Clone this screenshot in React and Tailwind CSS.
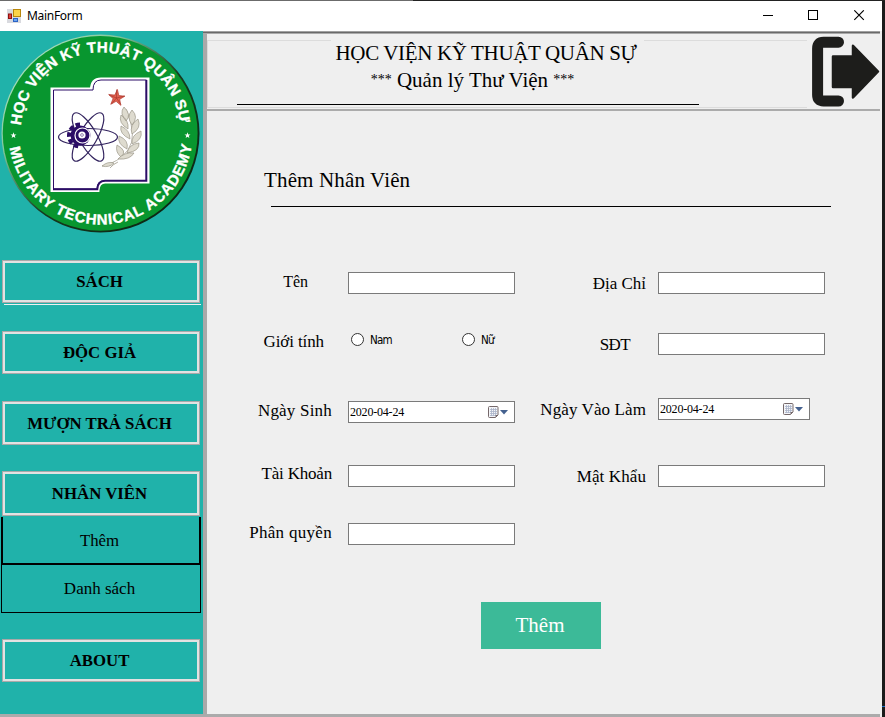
import React from "react";

function AppIcon() {
  return (
    <svg width="14" height="14" viewBox="0 0 14 14" className="shrink-0">
      <rect width="14" height="14" fill="#d9dadf" />
      <rect x="6.5" y=".5" width="7" height="7" fill="#fbd34a" stroke="#b8860b" />
      <rect x="1.5" y="5" width="3" height="4.5" fill="#e04038" stroke="#8e1010" />
      <rect x="6.5" y="9.5" width="4" height="3" fill="#6aa5f2" stroke="#2c63c4" />
    </svg>
  );
}

function TitleBar() {
  return (
    <div className="flex h-[30px] shrink-0 items-center bg-white pl-[7px] text-black">
      <AppIcon />
      <span className="ml-[6px] font-['Noto_Sans','Open_Sans',sans-serif] text-[12px] leading-[30px] tracking-[-0.3px]">
        MainForm
      </span>
      <svg width="102" height="11" viewBox="0 0 102 11" className="-mt-px ml-auto mr-[17px]" fill="none" stroke="#000">
        <path d="M0 5.5H10M45.5 .5h9v9h-9z" shapeRendering="crispEdges" />
        <path d="M91.3 .3l9.5 9.5M100.8 .3l-9.5 9.5" strokeWidth="1.1" />
      </svg>
    </div>
  );
}

const STAR = "M0-4L.95-1.25H3.8L1.55.45 2.35 3.2 0 1.55-2.35 3.2-1.55.45-3.8-1.25H-.95Z";

function Logo() {
  return (
    <svg width="203" height="204" viewBox="0 31 203 204" className="shrink-0">
      <defs>
        <linearGradient id="rim" x1="0" y1="0" x2="1" y2="1">
          <stop offset="0" stopColor="#c5efd5" />
          <stop offset=".3" stopColor="#7fc79a" />
          <stop offset=".55" stopColor="#16391f" />
          <stop offset="1" stopColor="#08200f" />
        </linearGradient>
        <path id="arcTop" d="M20.900 126.500A79.800 79.800 0 0 1 180.100 126.500" />
        <path id="arcBottom" d="M9.600 146.800A92 92 0 0 0 191.400 146.800" />
      </defs>
      <circle cx="100.5" cy="133.5" r="99" fill="url(#rim)" />
      <circle cx="100.2" cy="133.3" r="97.4" fill="#08962f" />
      <g fill="#fff" stroke="#fff" strokeWidth=".35" className="font-['Liberation_Sans',sans-serif] text-[15px] font-bold">
        <text textLength="235">
          <textPath href="#arcTop" startOffset="1" textLength="235">HỌC VIỆN KỸ THUẬT QUÂN SỰ</textPath>
        </text>
        <text textLength="261">
          <textPath href="#arcBottom" startOffset="1" textLength="261">MILITARY TECHNICAL ACADEMY</textPath>
        </text>
      </g>
      <path d={STAR} transform="translate(13.5 135.5) scale(.8)" fill="#fff" />
      <path d={STAR} transform="translate(187.5 135.5) scale(.8)" fill="#fff" />
      <path
        d="M52.5 89.5H92Q92 79.500 101 79.500H147.500V181.500H105Q98 182 97.500 190H52.500Z"
        fill="#fff"
        stroke="#fff"
        strokeWidth="4"
      />
      <path
        d="M53.500 90H93Q93 80 101 80H146.500V180.500H105Q97 181 97 189H53.500Z"
        fill="#fff"
        stroke="#2b0d66"
        strokeWidth="1"
      />
      <path d="M146.300 80V180.700H105Q97.500 181 97.300 189.200H53" fill="none" stroke="#2b0d66" strokeWidth="2" />
      <path d={STAR} transform="translate(116.500 98) rotate(6) scale(2.150)" fill="#e0604f" stroke="#b23a30" strokeWidth=".3" />
      <path d="M116.500 98V89.500M116.500 98l8-2M116.500 98l4.500 6.500M116.500 98l-5 6M116.500 98l-7.500-3" stroke="#a5342a" strokeWidth=".6" />
      <g fill="none" stroke="#33245f" strokeWidth="1.2">
        <ellipse cx="88" cy="137" rx="29.500" ry="8.500" />
        <ellipse cx="88" cy="137" rx="27.500" ry="9" transform="rotate(60 88 137)" />
        <ellipse cx="88" cy="137" rx="27.500" ry="9" transform="rotate(-60 88 137)" />
      </g>
      <path d="M80 124.500A11 11 0 0 0 80 146.500" fill="none" stroke="#2b0d66" strokeWidth="4" strokeDasharray="4.500 2.500" />
      <circle cx="80.500" cy="135.500" r="10" fill="#2b0d66" />
      <circle cx="82.500" cy="135.500" r="7.500" fill="none" stroke="#fff" strokeWidth="1.200" />
      <circle cx="82" cy="135" r="3.600" fill="#fff" />
      <circle cx="82" cy="135" r="1.400" fill="#fff" stroke="#2b0d66" strokeWidth=".5" />
      <g fill="#dedbcf" stroke="#9b9788" strokeWidth=".7">
        <path d="M102 166Q118 163 128 150Q138 136 126 109" fill="none" />
        <path d="M124 107q-5 6 2 14q6-6-2-14zM121 115q-3 8 7 14q1-9-7-14zM121 126q-2 8 9 13q0-9-9-13zM119 136q-2 8 8 13q2-9-8-13zM117 145q-2 7 4 12q7-6-4-12z" />
        <path d="M132 110q7 7 0 15q-6-8 0-15zM138 119q4 9-6 15q-3-9 6-15zM141 131q2 9-9 13q-1-9 9-13zM139 143q1 8-12 10q2-9 12-10zM134 153q-4 7-16 6q6-7 16-6z" />
        <path d="M102 166q6-5 12-3q-5 5-12 3zM110 168q3-4 8-6" />
      </g>
    </svg>
  );
}

function MenuButton({ className, children }) {
  return (
    <button
      className={
        "ml-[2px] flex w-[198px] shrink-0 items-center justify-center border border-[#a9a9a9] text-[16.8px] font-bold leading-5 text-black shadow-[inset_0_0_0_2px_#e2e2e2] " +
        className
      }
    >
      <span className="-ml-[3px]">{children}</span>
    </button>
  );
}

function Sidebar() {
  return (
    <nav className="flex w-[203px] shrink-0 flex-col bg-[#20b2aa]">
      <Logo />
      <MenuButton className="mt-[25px] h-[43px]">SÁCH</MenuButton>
      <div className="ml-1 mt-px h-px w-[197px] shrink-0 bg-[#f0f0f0]" />
      <MenuButton className="mt-[26px] h-[43px]">ĐỘC GIẢ</MenuButton>
      <MenuButton className="mt-[27px] h-[44px] pt-px">MƯỢN TRẢ SÁCH</MenuButton>
      <MenuButton className="mt-[26px] h-[45px]">NHÂN VIÊN</MenuButton>
      <button className="ml-px mt-px h-[48px] w-[200px] shrink-0 border-x-2 border-b-2 border-black pr-[3px] pt-px text-[16.8px] leading-[46px]">
        Thêm
      </button>
      <button className="ml-px h-[48px] w-[200px] shrink-0 border border-t-0 border-black pr-[3px] text-[17px] leading-[47px]">
        Danh sách
      </button>
      <MenuButton className="mt-[26px] h-[43px]">ABOUT</MenuButton>
    </nav>
  );
}

function ExitIcon() {
  return (
    <svg width="68" height="72" viewBox="0 0 68 72" className="shrink-0">
      <path d="M26.500 6.200H11.500Q5.600 6.200 5.600 12.500V59Q5.600 65 11.500 65H26.500" fill="none" stroke="#1d1d1b" strokeWidth="11" strokeLinecap="round" />
      <path d="M21 20.500H41V9.800L66 35.500 41 61.500V51H21Z" fill="#1d1d1b" stroke="#1d1d1b" strokeWidth="2.500" strokeLinejoin="round" />
    </svg>
  );
}

function Asterisks() {
  return <span className="align-[3px] text-[14px] leading-none">***</span>;
}

function Header() {
  return (
    <header className="flex h-[77px] shrink-0 border-b-2 border-[#ababab]">
      <div className="flex h-full w-[600px] flex-col">
        <div className="mt-[6px] flex h-[68px] shrink-0 border-b border-l border-[#dcdcdc]">
          <div className="h-px w-[123px] bg-[#dcdcdc]" />
          <div className="flex w-[313px] flex-col items-center whitespace-nowrap text-[21px]">
            <div className="-ml-[3px] h-[27px] leading-[27px] tracking-[-0.35px]">HỌC VIỆN KỸ THUẬT QUÂN SỰ</div>
            <div className="-ml-[30px] h-[26px] leading-[26px]">
              <Asterisks /> Quản lý Thư Viện <Asterisks />
            </div>
            <div className="-ml-[40px] mt-[11px] h-px w-[462px] shrink-0 bg-black" />
          </div>
          <div className="h-px w-[163px] bg-[#dcdcdc]" />
        </div>
      </div>
      <div className="ml-[5px] mt-[2px]">
        <ExitIcon />
      </div>
    </header>
  );
}

function DateBox({ className }) {
  return (
    <div className={"flex h-[22px] items-center border border-[#7a7a7a] bg-white pl-px " + className}>
      <span className="text-[12px] leading-5 tracking-[-0.2px]">2020-04-24</span>
      <svg width="21" height="13" viewBox="0 0 21 13" className="ml-auto">
        <path d="M1.500 1.500q0-1 1-1h7.500q1 0 1 1v7.500l-2.500 2.500h-6q-1 0-1-1z" fill="#f4f5f8" stroke="#75686a" />
        <path d="M3 3.500h7M3 5.500h7M3 7.500h7M3 9.500h5M4.500 2v8M6.500 2v8M8.500 2v8" stroke="#a9b4c9" strokeWidth=".8" />
        <path d="M8.500 11.500v-2.500h2.500z" fill="#75686a" />
        <path d="M13 4h8l-4 4.500z" fill="#44618f" />
      </svg>
    </div>
  );
}

function TextBox() {
  return <input className="h-[22px] w-[167px] shrink-0 border border-[#7a7a7a] bg-white outline-none" />;
}

function Field({ label, rowClass, labelClass, children }) {
  return (
    <div className={"flex h-[22px] items-start " + rowClass}>
      <label className={"shrink-0 whitespace-nowrap text-right leading-5 " + labelClass}>{label}</label>
      {children}
    </div>
  );
}

function Radio({ label, className }) {
  return (
    <div className={"flex h-[13px] items-center " + className}>
      <span className="h-[13px] w-[13px] shrink-0 rounded-full border border-[#333] bg-white" />
      <span className="ml-[6px] pt-px font-['DejaVu_Sans_Condensed','DejaVu_Sans',sans-serif] text-[11.5px] leading-[13px] tracking-[-0.8px]">
        {label}
      </span>
    </div>
  );
}

function EmployeeForm() {
  return (
    <main className="flex flex-1 flex-col">
      <h1 className="ml-[57px] mt-[57px] text-[21px] leading-6 tracking-[0.15px]">Thêm Nhân Viên</h1>
      <div className="ml-[64px] mt-[14px] h-px w-[560px] shrink-0 bg-black" />
      <div className="mt-[65px] flex text-[17px]">
        <div className="ml-[33px] w-[275px]">
          <Field label="Tên" labelClass="w-[108px] pr-[40px] text-[16px]">
            <TextBox />
          </Field>
          <Field label="Giới tính" rowClass="mt-[39px]" labelClass="-mt-px w-[108px] pr-[24px] tracking-[-0.1px]">
            <Radio label="Nam" className="ml-[3px] w-[40px]" />
            <Radio label="Nữ" className="ml-[71px]" />
          </Field>
          <Field label="Ngày Sinh" rowClass="mt-[46px]" labelClass="w-[108px] pr-[16px] tracking-[0.2px]">
            <DateBox className="w-[167px] pr-[6px]" />
          </Field>
          <Field label="Tài Khoản" rowClass="mt-[42px]" labelClass="-mt-px w-[108px] pr-[16px] tracking-[-0.2px]">
            <TextBox />
          </Field>
          <Field label="Phân quyền" rowClass="mt-[36px]" labelClass="w-[108px] pr-[16px] tracking-[0.3px]">
            <TextBox />
          </Field>
        </div>
        <div className="ml-[15px] w-[295px]">
          <Field label="Địa Chỉ" labelClass="mt-[2px] w-[128px] pr-[12px]">
            <TextBox />
          </Field>
          <Field label="SĐT" rowClass="mt-[39px]" labelClass="mt-[2px] w-[128px] pr-[28px] tracking-[-0.6px]">
            <TextBox />
          </Field>
          <Field label="Ngày Vào Làm" rowClass="mt-[43px]" labelClass="mt-[2px] w-[128px] pr-[12px] tracking-[0.1px]">
            <DateBox className="w-[152px] pr-[6px]" />
          </Field>
          <Field label="Mật Khẩu" rowClass="mt-[45px]" labelClass="mt-[2px] w-[128px] pr-[12px] tracking-[0.1px]">
            <TextBox />
          </Field>
        </div>
      </div>
      <button className="ml-[274px] mt-[57px] h-[47px] w-[120px] shrink-0 bg-[#3cba98] pr-[2px] text-[21px] leading-[47px] text-white">
        Thêm
      </button>
    </main>
  );
}

export default function App() {
  return (
    <div className="flex h-[717px] w-[885px] flex-col overflow-hidden bg-[#efefef] font-['Palatino_Linotype','Liberation_Serif',serif] text-black">
      <div className="flex h-px shrink-0">
        <div className="w-[413px] bg-[#6b6b6b]" />
        <div className="flex-1 bg-[#222]" />
      </div>
      <div className="flex min-h-0 flex-1">
        <div className="flex w-[882px] flex-col">
          <TitleBar />
          <div className="flex min-h-0 flex-1">
            <Sidebar />
            <div className="flex w-[677px] flex-col border-l-4 border-[#a9a9a9]">
              <div className="-ml-1 h-px shrink-0 bg-[#a0a0a0]" />
              <div className="-ml-1 h-px shrink-0 bg-[#696969]" />
              <div className="h-px shrink-0 bg-[#a9a9a9]" />
              <Header />
              <EmployeeForm />
            </div>
          </div>
          <div className="h-[3px] w-[880px] shrink-0 bg-[#ababab]" />
        </div>
        <div className="flex w-[3px] flex-col bg-[#1b1b1b]">
          <div className="mt-[705px] h-px bg-[#1b70c8]" />
        </div>
      </div>
    </div>
  );
}
